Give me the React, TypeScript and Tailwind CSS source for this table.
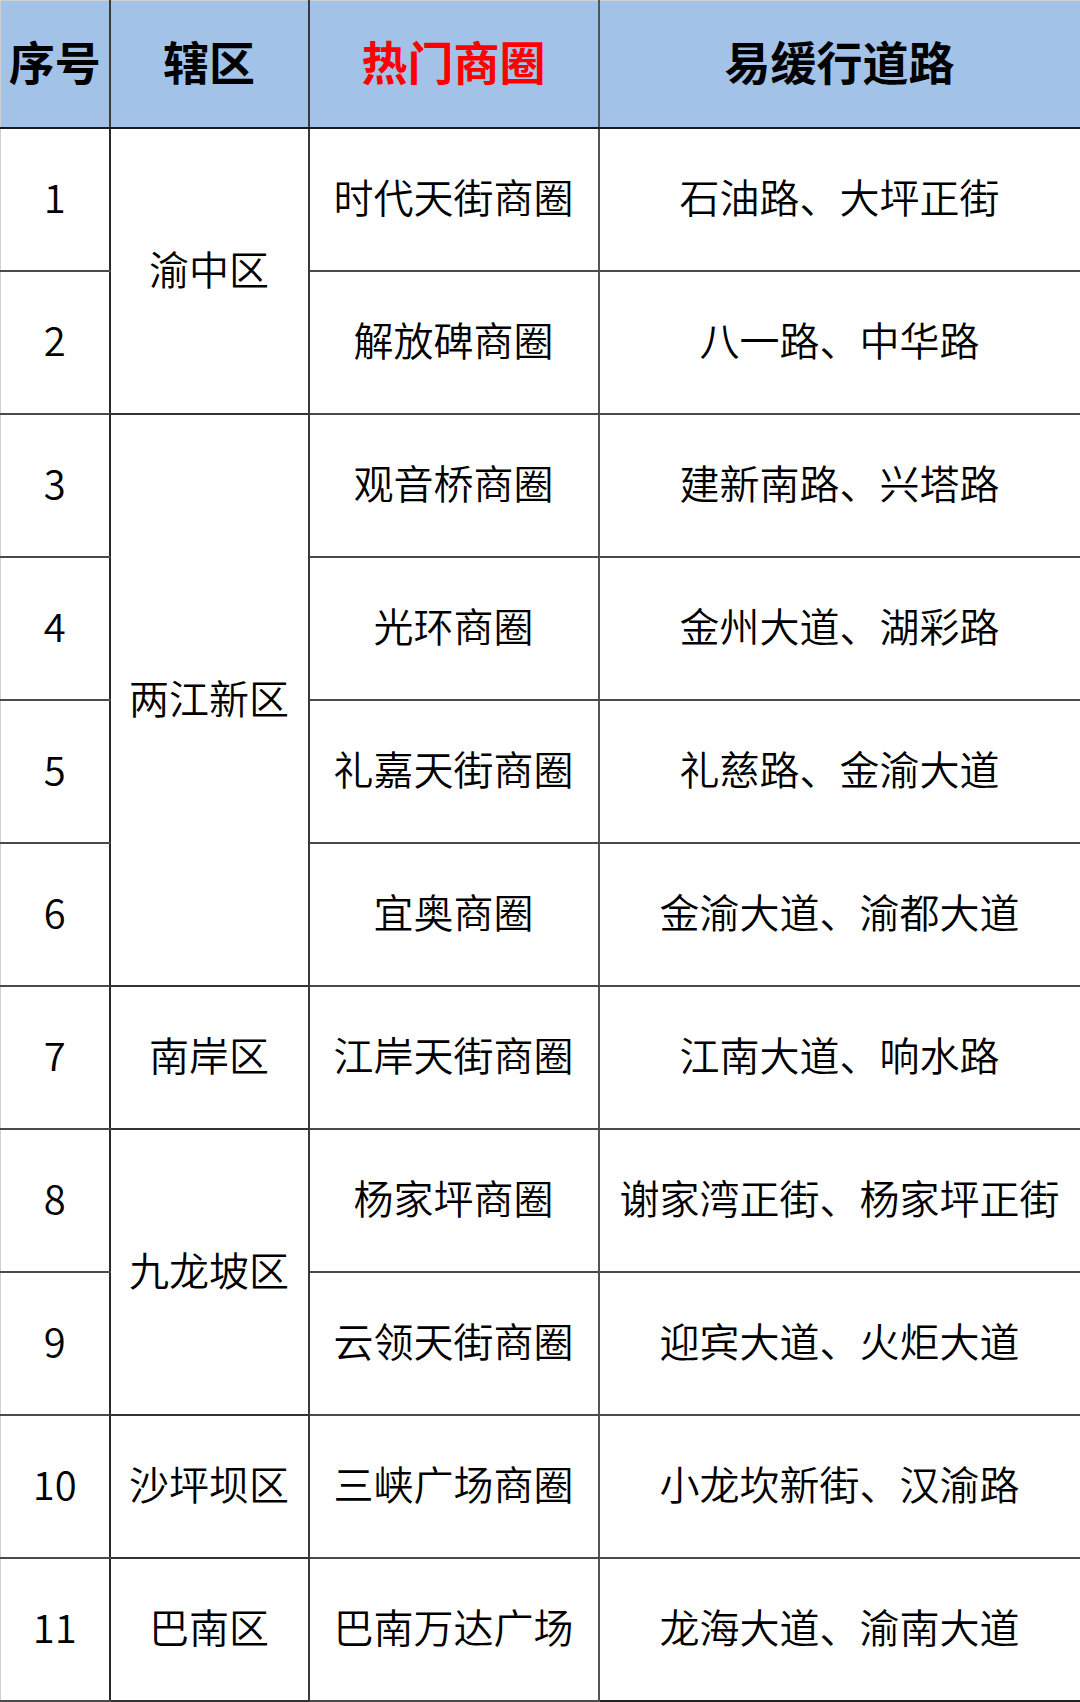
import React from "react";

type Row = { n: string; area: string; span: number; circle: string; road: string };

const rows: Row[] = [
  { n: "1", area: "渝中区", span: 2, circle: "时代天街商圈", road: "石油路、大坪正街" },
  { n: "2", area: "", span: 0, circle: "解放碑商圈", road: "八一路、中华路" },
  { n: "3", area: "两江新区", span: 4, circle: "观音桥商圈", road: "建新南路、兴塔路" },
  { n: "4", area: "", span: 0, circle: "光环商圈", road: "金州大道、湖彩路" },
  { n: "5", area: "", span: 0, circle: "礼嘉天街商圈", road: "礼慈路、金渝大道" },
  { n: "6", area: "", span: 0, circle: "宜奥商圈", road: "金渝大道、渝都大道" },
  { n: "7", area: "南岸区", span: 1, circle: "江岸天街商圈", road: "江南大道、响水路" },
  { n: "8", area: "九龙坡区", span: 2, circle: "杨家坪商圈", road: "谢家湾正街、杨家坪正街" },
  { n: "9", area: "", span: 0, circle: "云领天街商圈", road: "迎宾大道、火炬大道" },
  { n: "10", area: "沙坪坝区", span: 1, circle: "三峡广场商圈", road: "小龙坎新街、汉渝路" },
  { n: "11", area: "巴南区", span: 1, circle: "巴南万达广场", road: "龙海大道、渝南大道" },
];

const font = { fontFamily: '"Noto Sans CJK SC", "Noto Sans", sans-serif' };

export default function App() {
  return (
    <div className="w-[1080px] h-[1702px] bg-white overflow-hidden" style={font}>
      <table className="w-[1080px] table-fixed border-collapse text-black">
        <colgroup>
          <col className="w-[109px]" />
          <col className="w-[199px]" />
          <col className="w-[290px]" />
          <col className="w-[482px]" />
        </colgroup>
        <thead>
          <tr className="h-[127px] bg-[#a2c2e7] text-[46px] font-bold leading-none">
            <th className="border-t border-l border-t-[#d0d0d0] border-l-[#d0d0d0] border-r-2 border-r-[#3a3a3a] border-b-2 border-b-[#1a1a1a] p-0 pb-[8px] text-center align-middle">序号</th>
            <th className="border-t border-t-[#d0d0d0] border-r-2 border-r-[#3a3a3a] border-b-2 border-b-[#1a1a1a] p-0 pb-[8px] text-center align-middle">辖区</th>
            <th className="border-t border-t-[#d0d0d0] border-r-2 border-r-[#555] border-b-2 border-b-[#1a1a1a] p-0 pb-[8px] text-center align-middle text-[#ff0000]">热门商圈</th>
            <th className="border-t border-t-[#d0d0d0] border-r-2 border-r-[#222] border-b-2 border-b-[#1a1a1a] p-0 pb-[8px] text-center align-middle">易缓行道路</th>
          </tr>
        </thead>
        <tbody className="text-[40px] leading-none font-[350]">
          {rows.map((r, i) => (
            <tr key={r.n} className="h-[143px]">
              <td className="border-l border-l-[#d0d0d0] border-r-2 border-r-[#2a2a2a] border-b-2 border-b-[#4a4a4a] p-0 pb-[6px] text-center align-middle">{r.n}</td>
              {r.span > 0 && (
                <td rowSpan={r.span} className="border-r-2 border-r-[#3a3a3a] border-b-2 border-b-[#333] p-0 pb-[6px] text-center align-middle">{r.area}</td>
              )}
              <td className="border-r-2 border-r-[#555] border-b-2 border-b-[#4a4a4a] p-0 pb-[6px] text-center align-middle">{r.circle}</td>
              <td className={"border-r-2 border-r-[#222] border-b-2 p-0 pb-[6px] text-center align-middle " + (i === rows.length - 1 ? "border-b-[#222]" : "border-b-[#4a4a4a]")}>{r.road}</td>
            </tr>
          ))}
        </tbody>
      </table>
    </div>
  );
}
